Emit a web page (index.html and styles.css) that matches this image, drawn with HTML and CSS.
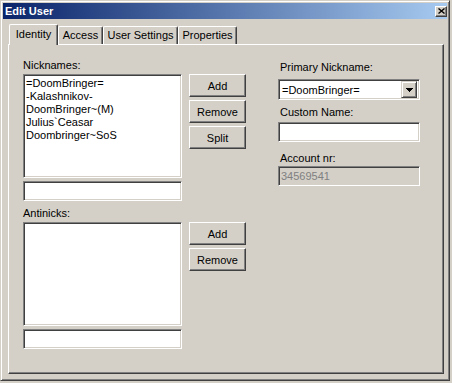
FILE: index.html
```html
<!DOCTYPE html>
<html>
<head>
    <title>Edit User</title>
    <meta charset="UTF-8">
    <link rel="stylesheet" href="styles.css">
</head>
<body>
    <div class="window">
        <div class="titlebar">
            <span class="title">Edit User</span>
            <span class="close">
                <svg width="7" height="6" viewBox="0 0 7 6">
                    <path d="M0.5 0.5 L6.5 5.5 M6.5 0.5 L0.5 5.5" stroke="#000" stroke-width="1.4" fill="none"/>
                </svg>
            </span>
        </div>

        <div class="tabs">
            <div class="tab tab-active tab-identity">Identity</div>
            <div class="tab tab-access">Access</div>
            <div class="tab tab-settings">User Settings</div>
            <div class="tab tab-properties">Properties</div>
        </div>

        <div class="panel">
            <div class="col-left">
                <div class="group">
                    <div class="label">Nicknames:</div>
                    <div class="group-row">
                        <div class="list-col">
                            <div class="listbox sunken">
                                <div class="item">=DoomBringer=</div>
                                <div class="item">-Kalashnikov-</div>
                                <div class="item">DoomBringer~(M)</div>
                                <div class="item">Julius`Ceasar</div>
                                <div class="item">Doombringer~SoS</div>
                            </div>
                            <div class="field sunken"></div>
                        </div>
                        <div class="btn-col">
                            <button class="btn">Add</button>
                            <button class="btn">Remove</button>
                            <button class="btn">Split</button>
                        </div>
                    </div>
                </div>

                <div class="group group-anti">
                    <div class="label">Antinicks:</div>
                    <div class="group-row">
                        <div class="list-col">
                            <div class="listbox sunken"></div>
                            <div class="field sunken"></div>
                        </div>
                        <div class="btn-col">
                            <button class="btn">Add</button>
                            <button class="btn">Remove</button>
                        </div>
                    </div>
                </div>
            </div>

            <div class="col-right">
                <div class="label label-primary">Primary Nickname:</div>
                <div class="combo sunken">
                    <span class="combo-text">=DoomBringer=</span>
                    <span class="combo-btn">
                        <svg width="7" height="4" viewBox="0 0 7 4" shape-rendering="crispEdges">
                            <path d="M0 0h7v1h-1v1h-1v1h-1v1h-1v-1h-1v-1h-1v-1h-1z" fill="#000"/>
                        </svg>
                    </span>
                </div>
                <div class="label label-custom">Custom Name:</div>
                <div class="field field-wide sunken"></div>
                <div class="label label-account">Account nr:</div>
                <div class="field field-wide field-disabled sunken">34569541</div>
            </div>
        </div>
    </div>
</body>
</html>
```

FILE: styles.css
```css
body {
    margin: 0;
    background: #d4d0c8;
    font-family: "Liberation Sans", Arial, sans-serif;
    font-size: 11px;
    color: #000;
}

.window {
    width: 450px;
    height: 381px;
    box-sizing: border-box;
    padding: 2px;
    background: #d4d0c8;
    border: 1px solid;
    border-color: #d4d0c8 #404040 #404040 #d4d0c8;
    box-shadow: inset 1px 1px #fff, inset -1px -1px #808080;
}

.titlebar {
    height: 16px;
    display: flex;
    align-items: center;
    justify-content: space-between;
    padding-left: 2px;
    background: linear-gradient(to right, #0a246a, #a6caf0);
    color: #fff;
    font-weight: bold;
}

.close {
    width: 12px;
    height: 11px;
    box-sizing: border-box;
    display: flex;
    align-items: center;
    justify-content: center;
    background: #d4d0c8;
    border: 1px solid;
    border-color: #fff #404040 #404040 #fff;
    box-shadow: inset -1px -1px #808080;
}

/* tab strip */
.tabs {
    display: flex;
    align-items: flex-end;
    height: 20px;
    margin: 5px 0 0 6px;
}

.tab {
    height: 18px;
    box-sizing: border-box;
    padding-top: 2px;
    line-height: 13px;
    text-align: center;
    border: 1px solid;
    border-bottom: none;
    border-color: #fff #404040 #404040 #fff;
    border-radius: 2px 2px 0 0;
    box-shadow: inset -1px 0 #808080;
}

.tab-active {
    height: 21px;
    margin-bottom: -1px;
    padding-top: 3px;
    position: relative;
    z-index: 1;
    background: #d4d0c8;
}

.tab-identity { width: 49px; }
.tab-access { width: 45px; }
.tab-settings { width: 75px; }
.tab-properties { width: 59px; }

.panel {
    width: 436px;
    height: 330px;
    margin-left: 5px;
    box-sizing: border-box;
    display: flex;
    padding-left: 14px;
    border: 1px solid;
    border-color: #fff #404040 #404040 #fff;
    box-shadow: inset -1px -1px #808080;
}

.sunken {
    box-sizing: border-box;
    background: #fff;
    border: 1px solid;
    border-color: #808080 #fff #fff #808080;
    box-shadow: inset 1px 1px #404040, inset -1px -1px #d4d0c8;
}

.label {
    line-height: 13px;
    margin-bottom: 2px;
}

/* left side */
.col-left {
    padding-top: 14px;
}

.group-anti {
    margin-top: 6px;
}

.group-row {
    display: flex;
}

.listbox {
    width: 159px;
    height: 104px;
    padding: 2px;
}

.item {
    line-height: 13px;
    white-space: nowrap;
}

.field {
    width: 159px;
    height: 20px;
    margin-top: 3px;
}

.btn-col {
    display: flex;
    flex-direction: column;
    gap: 3px;
    margin-left: 7px;
}

.btn {
    width: 57px;
    height: 23px;
    padding: 0;
    font-family: inherit;
    font-size: 11px;
    color: #000;
    background: #d4d0c8;
    border: 1px solid;
    border-color: #fff #404040 #404040 #fff;
    box-shadow: inset -1px -1px #808080;
}

/* right side */
.col-right {
    width: 142px;
    margin-left: 32px;
    padding-top: 16px;
}

.col-right .label {
    padding-left: 2px;
}

.label-primary { margin-bottom: 5px; }
.label-custom { margin-top: 6px; margin-bottom: 3px; }
.label-account { margin-top: 10px; margin-bottom: 1px; }

.combo {
    height: 21px;
    display: flex;
    align-items: center;
    padding: 2px;
}

.combo-text {
    flex: 1;
    padding-left: 1px;
}

.combo-btn {
    width: 16px;
    height: 17px;
    box-sizing: border-box;
    display: flex;
    align-items: center;
    justify-content: center;
    background: #d4d0c8;
    border: 1px solid;
    border-color: #d4d0c8 #404040 #404040 #d4d0c8;
    box-shadow: inset 1px 1px #fff, inset -1px -1px #808080;
}

.field-wide {
    width: 142px;
    margin-top: 0;
}

.field-disabled {
    background: #d4d0c8;
    color: #808080;
    padding-left: 2px;
    line-height: 18px;
}
```
